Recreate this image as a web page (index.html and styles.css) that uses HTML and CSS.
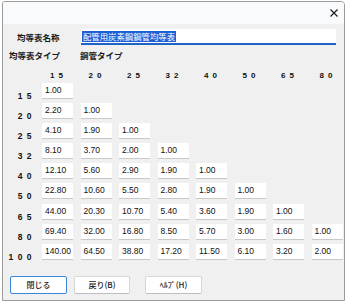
FILE: index.html
```html
<!DOCTYPE html>
<html lang="ja">
<head>
    <meta charset="UTF-8">
    <meta name="viewport" content="width=device-width, initial-scale=1.0">
    <title>均等表</title>
    <link rel="stylesheet" href="styles.css">
</head>
<body>
    <div class="window">
        <div class="titlebar">
            <svg class="close" width="8" height="8" viewBox="0 0 8 8">
                <path d="M0.5 0.5 L7.5 7.5 M7.5 0.5 L0.5 7.5" stroke="#1c1c1c" stroke-width="1.2" fill="none"/>
            </svg>
        </div>

        <div class="content">
            <div class="field name_row">
                <span class="label name_label">均等表名称</span>
                <div class="input"><span class="selected">配管用炭素鋼鋼管均等表</span></div>
            </div>
            <div class="field type_row">
                <span class="label type_label">均等表タイプ</span>
                <span class="label">鋼管タイプ</span>
            </div>

            <div class="table">
                <span></span>
                <span class="colh">1 5</span>
                <span class="colh">2 0</span>
                <span class="colh">2 5</span>
                <span class="colh">3 2</span>
                <span class="colh">4 0</span>
                <span class="colh">5 0</span>
                <span class="colh">6 5</span>
                <span class="colh">8 0</span>

                <span class="rowh">1 5</span>
                <span class="cell">1.00</span>

                <span class="rowh">2 0</span>
                <span class="cell">2.20</span><span class="cell">1.00</span>

                <span class="rowh">2 5</span>
                <span class="cell">4.10</span><span class="cell">1.90</span><span class="cell">1.00</span>

                <span class="rowh">3 2</span>
                <span class="cell">8.10</span><span class="cell">3.70</span><span class="cell">2.00</span><span class="cell">1.00</span>

                <span class="rowh">4 0</span>
                <span class="cell">12.10</span><span class="cell">5.60</span><span class="cell">2.90</span><span class="cell">1.90</span><span class="cell">1.00</span>

                <span class="rowh">5 0</span>
                <span class="cell">22.80</span><span class="cell">10.60</span><span class="cell">5.50</span><span class="cell">2.80</span><span class="cell">1.90</span><span class="cell">1.00</span>

                <span class="rowh">6 5</span>
                <span class="cell">44.00</span><span class="cell">20.30</span><span class="cell">10.70</span><span class="cell">5.40</span><span class="cell">3.60</span><span class="cell">1.90</span><span class="cell">1.00</span>

                <span class="rowh">8 0</span>
                <span class="cell">69.40</span><span class="cell">32.00</span><span class="cell">16.80</span><span class="cell">8.50</span><span class="cell">5.70</span><span class="cell">3.00</span><span class="cell">1.60</span><span class="cell">1.00</span>

                <span class="rowh">1 0 0</span>
                <span class="cell">140.00</span><span class="cell">64.50</span><span class="cell">38.80</span><span class="cell">17.20</span><span class="cell">11.50</span><span class="cell">6.10</span><span class="cell">3.20</span><span class="cell">2.00</span>
            </div>

            <div class="buttons">
                <button class="btn btn--focus">閉じる</button>
                <button class="btn btn--back">戻り(B)</button>
                <button class="btn btn--help">ﾍﾙﾌﾟ(H)</button>
            </div>
        </div>
    </div>
</body>
</html>
```

FILE: styles.css
```css
*{
    box-sizing: border-box;
    margin: 0;
    padding: 0;
}

body{
    background-color: #ffffff;
    font-family: "Noto Sans CJK JP", "Liberation Sans", sans-serif;
    color: #1a1a1a;
}

.window{
    width: 343px;
    height: 300px;
    margin: 1px 0 0 2px;
    border: 1px solid #9a9a9a;
    border-radius: 3px 4px 0 0;
    background-color: #f0f0f0;
    display: flex;
    flex-direction: column;
    overflow: hidden;
}

.titlebar{
    flex-shrink: 0;
    height: 22px;
    background-color: #f9fafc;
    display: flex;
    justify-content: flex-end;
    align-items: center;
    padding-right: 6px;
}

.content{
    flex: 1;
    display: flex;
    flex-direction: column;
}

.field{
    flex-shrink: 0;
    display: flex;
    align-items: center;
}

.label{
    font-size: 8.5px;
    font-weight: 700;
    line-height: 10px;
}

.name_row{
    margin-top: 5px;
    height: 16px;
}

.name_label{
    padding-left: 14px;
    width: 78px;
}

.input{
    width: 255px;
    height: 16px;
    background-color: #ffffff;
    border-bottom: 2px solid #1f63c6;
    display: flex;
    align-items: center;
    padding-left: 1px;
}

.input .selected{
    background-color: #1f5fd6;
    color: #ffffff;
    font-size: 8.4px;
    line-height: 11px;
    padding: 0 1px;
}

.type_row{
    margin-top: 5px;
    height: 10px;
}

.type_label{
    padding-left: 6px;
    width: 77px;
}

.table{
    flex-shrink: 0;
    display: grid;
    grid-template-columns: 26.5px repeat(8, 31px);
    grid-template-rows: 14px;
    grid-auto-rows: 16px;
    column-gap: 7.5px;
    row-gap: 4.16px;
    padding-left: 5px;
    margin-top: 4.5px;
}

.colh{
    font-family: "Liberation Sans", sans-serif;
    font-size: 8px;
    font-weight: 700;
    letter-spacing: 1px;
    line-height: 9px;
    text-align: center;
    align-self: end;
    margin-bottom: -1px;
    padding-right: 1px;
    color: #111111;
}

.rowh{
    grid-column: 1;
    font-family: "Liberation Sans", sans-serif;
    font-size: 8.5px;
    font-weight: 700;
    letter-spacing: 1px;
    line-height: 9px;
    text-align: right;
    align-self: end;
    margin-bottom: -2px;
    padding-right: 2px;
    color: #111111;
}

.cell{
    background-color: #ffffff;
    border-bottom: 1px solid #c9c9c9;
    font-family: "Liberation Sans", sans-serif;
    font-size: 8.5px;
    line-height: 14px;
    padding-left: 3px;
    color: #111111;
}

.buttons{
    flex-shrink: 0;
    display: flex;
    margin-top: 16px;
    padding-left: 7px;
}

.btn{
    height: 18px;
    width: 57px;
    background-color: #ffffff;
    border: 1px solid #d6d6d6;
    border-bottom-color: #bdbdbd;
    border-radius: 2px;
    font-family: "Noto Sans CJK JP", "Liberation Sans", sans-serif;
    font-size: 8px;
    font-weight: 500;
    color: #1a1a1a;
}

.btn--focus{
    border: 1px solid #3a86d8;
}

.btn--back{
    width: 56px;
    margin-left: 7px;
}

.btn--help{
    margin-left: 15px;
}
```
